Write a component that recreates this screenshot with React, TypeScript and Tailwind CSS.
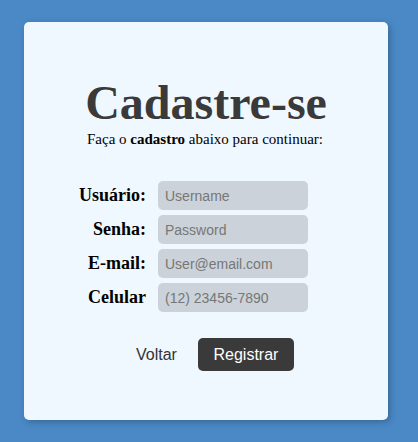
import React from "react";

export default function App() {
  const rows = [
    { label: "Usuário:", ph: "Username" },
    { label: "Senha:", ph: "Password" },
    { label: "E-mail:", ph: "User@email.com" },
    { label: "Celular", ph: "(12) 23456-7890" },
  ];
  return (
    <div className="w-[418px] h-[442px] bg-[#4a89c6] pt-[22px] pl-[24px]">
      <div className="w-[364px] h-[398px] bg-[#f0f8ff] rounded-[5px] shadow-[2px_2px_6px_rgba(0,0,0,0.25)] flex flex-col">
        <h1
          className="mt-[57px] text-center text-[48px] leading-[48px] font-bold text-[#3a3a3a]"
          style={{ fontFamily: '"Liberation Serif", serif' }}
        >
          Cadastre-se
        </h1>
        <p
          className="mt-[4px] text-center text-[15px] leading-[17px] text-black pr-[2px]"
          style={{ fontFamily: '"Liberation Serif", serif' }}
        >
          Faça o <b>cadastro</b> abaixo para continuar:
        </p>
        <div className="mt-[33px] pl-[55px] flex flex-col gap-[5px]">
          {rows.map((r) => (
            <div key={r.ph} className="flex items-center gap-[12px]">
              <label
                className="w-[67px] text-right text-[18px] font-bold text-black whitespace-nowrap"
                style={{ fontFamily: '"Liberation Serif", serif' }}
              >
                {r.label}
              </label>
              <input
                placeholder={r.ph}
                className="w-[150px] h-[29px] rounded-[5px] bg-[#cbd2d9] px-[7px] text-[14px] placeholder:text-[#777] outline-none"
                style={{ fontFamily: '"Liberation Sans", sans-serif' }}
              />
            </div>
          ))}
        </div>
        <div
          className="mt-[26px] flex items-center pl-[112px] gap-[21px]"
          style={{ fontFamily: '"Liberation Sans", sans-serif' }}
        >
          <span className="text-[16px] text-[#333]">Voltar</span>
          <button className="w-[96px] h-[33px] rounded-[5px] bg-[#3a3a3a] text-white text-[16px]">
            Registrar
          </button>
        </div>
      </div>
    </div>
  );
}
